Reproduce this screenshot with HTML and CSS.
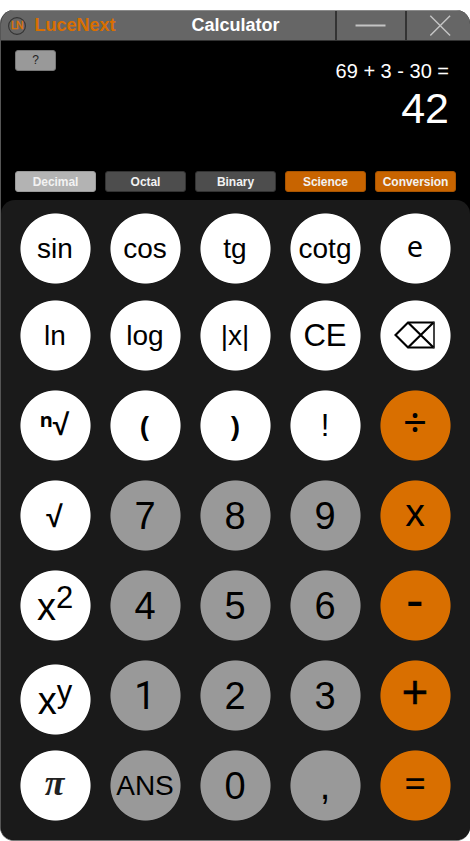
FILE: index.html
```html
<!DOCTYPE html>
<html lang="en">
<head>
<meta charset="utf-8">
<title>Calculator</title>
<link rel="stylesheet" href="styles.css">
</head>
<body>
<main class="window">
  <header class="titlebar">
    <svg class="logo" viewBox="0 0 18 18"><circle cx="9" cy="9" r="8.400" fill="none" stroke="#333" stroke-width="1.100"/><text x="9" y="12.400" text-anchor="middle">LN</text></svg>
    <span class="brand">LuceNext</span>
    <h1 class="title">Calculator</h1>
    <button class="winbtn" aria-label="Minimize"><svg viewBox="0 0 68 30"><path d="M18 15h31" stroke="#c4c4c4" stroke-width="2.200"/></svg></button>
    <button class="winbtn" aria-label="Close"><svg viewBox="0 0 64 30"><path d="M23.500 5L44 25.300M44 5L23.500 25.300" stroke="#c4c4c4" stroke-width="1.500"/></svg></button>
  </header>
  <section class="display">
    <button class="help">?</button>
    <div class="readout">
      <div class="expression">69 + 3 - 30 =</div>
      <div class="result">42</div>
    </div>
  </section>
  <nav class="modes">
    <button class="mode active">Decimal</button>
    <button class="mode">Octal</button>
    <button class="mode">Binary</button>
    <button class="mode accent">Science</button>
    <button class="mode accent">Conversion</button>
  </nav>
  <section class="keypad">
    <div class="row first">
      <button class="key">sin</button><button class="key">cos</button><button class="key">tg</button><button class="key">cotg</button><button class="key euler">e</button>
    </div>
    <div class="row">
      <button class="key">ln</button><button class="key">log</button><button class="key">|x|</button><button class="key clear">CE</button>
      <button class="key erase" aria-label="Backspace"><svg class="backspace" viewBox="0 0 42 28"><path d="M40 1.500H14L1.500 14 14 26.500h26" fill="none" stroke="#000" stroke-width="2.200"/><path d="M40 .5v27" stroke="#444" stroke-width="2"/><path d="M14 1.500l25.500 25M39.500 1.500L14 26.500" stroke="#000" stroke-width="2.200"/></svg></button>
    </div>
    <div class="row">
      <button class="key root"><span class="index">n</span>√</button><button class="key paren">(</button><button class="key paren">)</button><button class="key bang">!</button><button class="key op divide">÷</button>
    </div>
    <div class="row">
      <button class="key root square">√</button><button class="key num">7</button><button class="key num">8</button><button class="key num">9</button><button class="key op times">x</button>
    </div>
    <div class="row">
      <button class="key power"><span>x<sup>2</sup></span></button><button class="key num">4</button><button class="key num">5</button><button class="key num">6</button><button class="key op minus">-</button>
    </div>
    <div class="row">
      <button class="key power lowered"><span>x<sup>y</sup></span></button><button class="key num one">1</button><button class="key num">2</button><button class="key num">3</button><button class="key op plus">+</button>
    </div>
    <div class="row">
      <button class="key pi">π</button><button class="key num ans">ANS</button><button class="key num">0</button><button class="key num">,</button><button class="key op equals">=</button>
    </div>
  </section>
</main>
</body>
</html>
```
FILE: styles.css
```css
* { box-sizing: border-box; }
body { margin: 0; background: #fff; font-family: "Liberation Sans", Arial, sans-serif; overflow: hidden; }
button { border: 0; padding: 0; margin: 0; font: inherit; color: inherit; background: none; }
.window {
  margin-top: 10px; width: 470px; height: 831px; overflow: hidden;
  border-radius: 14px; background: #000; border-left: 1px solid #555; border-bottom: 1px solid #777;
}
.titlebar {
  display: flex; align-items: center; height: 31px; background: #666;
  border-top: 1px solid #8a8a8a; border-bottom: 1px solid #333;
}
.logo { width: 18px; height: 18px; margin-left: 7px; }
.logo text { font-size: 10.5px; fill: #e07400; stroke: #e07400; stroke-width: .3px; letter-spacing: -.8px; }
.brand { width: 99px; margin-left: 8.5px; font-size: 18px; font-weight: bold; color: #d96f00; }
.title { flex: 1; margin: 0 0 0 58px; font-size: 18px; font-weight: bold; color: #fff; }
.winbtn { height: 29px; width: 70px; border-left: 2px solid #333; }
.winbtn:last-child { width: 65px; }
.winbtn svg { display: block; height: 29px; width: 100%; }
.display { display: flex; justify-content: space-between; align-items: flex-start; height: 130px; padding: 9px 21px 0 14px; }
.help { width: 41px; height: 21px; padding-bottom: 2px; border-radius: 3px; background: #999; border: 1px solid #777; font-size: 12px; color: #222; }
.readout { color: #fff; text-align: right; }
.expression { margin-top: 10px; font-size: 20px; line-height: 23px; }
.result { font-size: 43px; line-height: 50px; }
.modes { display: flex; gap: 9px; height: 29px; padding-left: 14px; }
.mode { width: 81px; height: 21px; border-radius: 3px; background: #4d4d4d; border: 1px solid #333; font-size: 12px; font-weight: bold; letter-spacing: -.05px; color: #f2f2f2; }
.mode.active { background: #b3b3b3; border-color: #999; }
.mode.accent { background: #c86400; border-color: #a85400; }
.keypad { height: 640px; padding: 13px 0 0 19px; border-radius: 14px 14px 0 0; background: #1a1a1a; }
.row { display: flex; gap: 19px; height: 90px; }
.row.first { height: 87px; }
.key {
  --face: #fff;
  display: flex; align-items: center; justify-content: center; width: 71px; height: 71px;
  background: radial-gradient(circle, var(--face) 34.6px, transparent 35.5px);
  color: #000; font-size: 28px; line-height: 1; padding-right: 1px;
}
.num { --face: #999; font-size: 38px; }
.one { font-family: Roboto, sans-serif; }
.ans { font-size: 28px; }
.clear, .bang { font-size: 31px; }
.euler { font-family: "Noto Sans", sans-serif; font-size: 29px; padding-bottom: 7px; }
.erase { padding: 0 2px 2px 0; }
.backspace { width: 42px; height: 28px; }
.root { font-family: "Noto Sans", sans-serif; font-weight: bold; font-size: 30px; padding-bottom: 3px; padding-right: 2px; }
.square { padding-bottom: 0; }
.index { font-size: 20px; padding-bottom: 9px; }
.paren { font-family: "Noto Sans", sans-serif; font-weight: bold; font-size: 29px; }
.power { font-size: 38px; padding-top: 3px; }
.power sup { font-size: 31px; line-height: 0; vertical-align: 12px; }
.lowered { margin-top: 4px; }
.pi { font-family: "Liberation Serif", serif; font-style: italic; font-weight: bold; font-size: 36px; color: #222; padding-bottom: 5px; padding-right: 2px; }
.op { --face: #d96f00; font-family: "Noto Sans", sans-serif; font-size: 38px; padding-bottom: 9px; }
.divide { font-size: 42px; }
.plus { font-size: 47px; padding-bottom: 8px; -webkit-text-stroke: .4px #000; }
.minus { font-size: 54px; padding-bottom: 16px; }
.equals { padding-bottom: 7px; -webkit-text-stroke: .2px #000; }
```
